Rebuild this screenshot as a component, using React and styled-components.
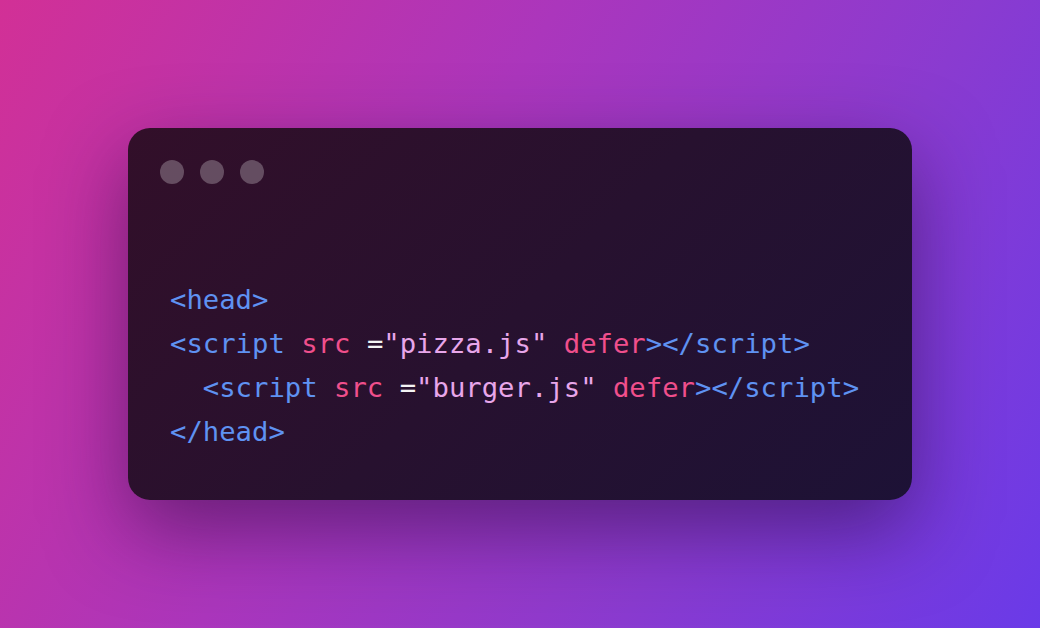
import React from 'react';
import styled, { createGlobalStyle } from 'styled-components';

const GlobalStyle = createGlobalStyle`
  html, body {
    margin: 0;
    padding: 0;
  }
  body {
    width: 1040px;
    height: 628px;
    overflow: hidden;
  }
`;

const Page = styled.div`
  width: 1040px;
  height: 628px;
  display: flex;
  align-items: center;
  justify-content: center;
  background: linear-gradient(120deg, #d23096 0%, #ab36bc 40%, #8a3bd0 70%, #6a3ae8 100%);
`;

const Window = styled.div`
  width: 784px;
  height: 372px;
  box-sizing: border-box;
  padding: 32px 32px 0 32px;
  border-radius: 22px;
  background: linear-gradient(135deg, #320f29 0%, #27112f 50%, #1d1236 100%);
  box-shadow: 0 30px 80px rgba(35, 8, 55, 0.5);
  display: flex;
  flex-direction: column;
`;

const Dots = styled.div`
  display: flex;
  gap: 16px;
`;

const Dot = styled.span`
  width: 24px;
  height: 24px;
  border-radius: 50%;
  background: rgba(255, 255, 255, 0.26);
`;

const Code = styled.pre`
  margin: 94px 0 0 10px;
  font-family: "DejaVu Sans Mono", "Liberation Mono", monospace;
  font-size: 27.25px;
  line-height: 44px;
  color: #ffffff;
`;

const Line = styled.div`
  padding-left: ${p => (p.indent ? p.indent * 16.4 : 0)}px;
  white-space: pre;
`;

const Tag = styled.span`
  color: #5f92f2;
`;

const Attr = styled.span`
  color: #f04f8c;
`;

const Str = styled.span`
  color: #e8a6ea;
`;

const Eq = styled.span`
  color: #f4f4f4;
`;

const ScriptLine = ({ file, indent }) => (
  <Line indent={indent}>
    <Tag>&lt;script</Tag> <Attr>src</Attr> <Eq>=</Eq>
    <Str>"{file}"</Str> <Attr>defer</Attr>
    <Tag>&gt;&lt;/script&gt;</Tag>
  </Line>
);

export default function App() {
  return (
    <>
      <GlobalStyle />
      <Page>
        <Window>
          <Dots>
            <Dot />
            <Dot />
            <Dot />
          </Dots>
          <Code>
            <Line><Tag>&lt;head&gt;</Tag></Line>
            <ScriptLine file="pizza.js" />
            <ScriptLine file="burger.js" indent={2} />
            <Line><Tag>&lt;/head&gt;</Tag></Line>
          </Code>
        </Window>
      </Page>
    </>
  );
}
